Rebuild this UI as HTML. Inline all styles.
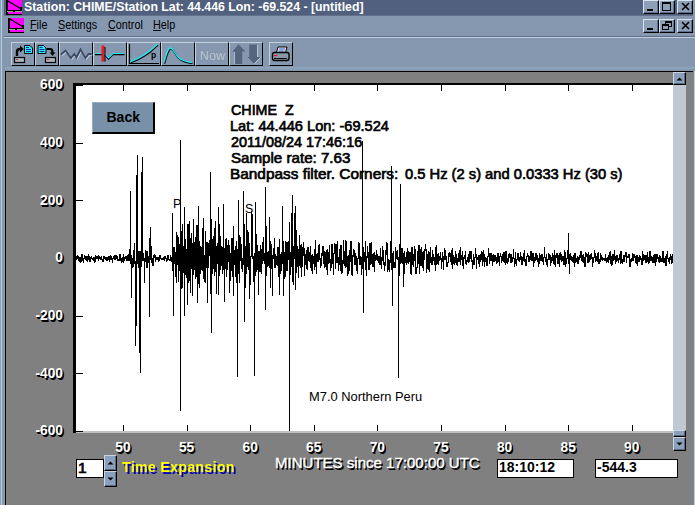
<!DOCTYPE html><html><head><meta charset="utf-8"><style>
html,body{margin:0;padding:0;}
body{width:695px;height:505px;position:relative;overflow:hidden;background:#8598b0;font-family:"Liberation Sans", sans-serif;}
div{font-family:"Liberation Sans", sans-serif;}
</style></head><body>
<div style="position:absolute;left:0px;top:0px;width:1px;height:505px;background:#8ca0b8"></div>
<div style="position:absolute;left:1px;top:0px;width:1px;height:505px;background:#b8cce0"></div>
<div style="position:absolute;left:2px;top:0px;width:2px;height:505px;background:#8498b0"></div>
<div style="position:absolute;left:693px;top:0px;width:2px;height:16px;background:#8a9cb4"></div>
<div style="position:absolute;left:4px;top:0px;width:689px;height:15px;background:#50607e"></div>
<div style="position:absolute;left:4px;top:15px;width:689px;height:1px;background:#62728c"></div>
<svg style="position:absolute;left:6px;top:0px" width="16" height="15" viewBox="0 0 16 15" shape-rendering="crispEdges"><rect x="0" y="0" width="16" height="15" fill="#ff00ff"/><rect x="0" y="0" width="1.5" height="15" fill="#000"/><rect x="0" y="14" width="16" height="1" fill="#000"/><rect x="0" y="10" width="16" height="1" fill="#000"/><rect x="1" y="11" width="15" height="1" fill="#98b088"/><rect x="7" y="11" width="2" height="1" fill="#000"/><rect x="14" y="7" width="2" height="3" fill="#000"/><path d="M1 0.5 L14.5 8.5" stroke="#000" stroke-width="1.3" shape-rendering="auto"/></svg>
<div style="position:absolute;left:24px;top:0.95px;font-size:12.3px;line-height:12.3px;color:#fff;font-weight:bold;white-space:pre;">Station: CHIME/Station Lat: 44.446 Lon: -69.524 - [untitled]</div>
<div style="position:absolute;left:643px;top:0px;width:16px;height:14px;box-sizing:border-box;background:#8ca0b8;border-top:1px solid #d8e4f0;border-left:1px solid #d8e4f0;border-right:1px solid #000;border-bottom:1px solid #000;box-shadow:inset -1px -1px 0 #607090;"><svg style="position:absolute;left:0;top:0" width="14" height="12" shape-rendering="crispEdges"><rect x="3" y="8" width="6" height="2" fill="#000"/></svg></div>
<div style="position:absolute;left:659px;top:0px;width:16px;height:14px;box-sizing:border-box;background:#8ca0b8;border-top:1px solid #d8e4f0;border-left:1px solid #d8e4f0;border-right:1px solid #000;border-bottom:1px solid #000;box-shadow:inset -1px -1px 0 #607090;"><svg style="position:absolute;left:0;top:0" width="14" height="12" shape-rendering="crispEdges"><rect x="2.5" y="1.5" width="8" height="8" fill="none" stroke="#000"/><rect x="3" y="2" width="7" height="1" fill="#000"/></svg></div>
<div style="position:absolute;left:677px;top:0px;width:16px;height:14px;box-sizing:border-box;background:#8ca0b8;border-top:1px solid #d8e4f0;border-left:1px solid #d8e4f0;border-right:1px solid #000;border-bottom:1px solid #000;box-shadow:inset -1px -1px 0 #607090;"><svg style="position:absolute;left:0;top:0" width="14" height="12" shape-rendering="crispEdges"><path d="M4 2 L11 9 M11 2 L4 9" stroke="#000" stroke-width="1.6" shape-rendering="auto"/></svg></div>
<svg style="position:absolute;left:8px;top:18px" width="16" height="15" viewBox="0 0 16 15" shape-rendering="crispEdges"><rect x="0" y="0" width="16" height="15" fill="#ff00ff"/><rect x="0" y="0" width="1.5" height="15" fill="#000"/><rect x="0" y="14" width="16" height="1" fill="#000"/><rect x="0" y="10" width="16" height="1" fill="#000"/><rect x="1" y="11" width="15" height="1" fill="#98b088"/><rect x="7" y="11" width="2" height="1" fill="#000"/><rect x="14" y="7" width="2" height="3" fill="#000"/><path d="M1 0.5 L14.5 8.5" stroke="#000" stroke-width="1.3" shape-rendering="auto"/></svg>
<div style="position:absolute;left:30px;top:19.39px;font-size:12px;line-height:12px;color:#000;font-weight:normal;white-space:pre;transform:scaleX(0.9);transform-origin:0 0;"><u>F</u>ile</div>
<div style="position:absolute;left:58px;top:19.39px;font-size:12px;line-height:12px;color:#000;font-weight:normal;white-space:pre;transform:scaleX(0.9);transform-origin:0 0;"><u>S</u>ettings</div>
<div style="position:absolute;left:108px;top:19.39px;font-size:12px;line-height:12px;color:#000;font-weight:normal;white-space:pre;transform:scaleX(0.9);transform-origin:0 0;"><u>C</u>ontrol</div>
<div style="position:absolute;left:153px;top:19.39px;font-size:12px;line-height:12px;color:#000;font-weight:normal;white-space:pre;transform:scaleX(0.9);transform-origin:0 0;"><u>H</u>elp</div>
<div style="position:absolute;left:643px;top:19px;width:16px;height:14px;box-sizing:border-box;background:#8ca0b8;border-top:1px solid #d8e4f0;border-left:1px solid #d8e4f0;border-right:1px solid #000;border-bottom:1px solid #000;box-shadow:inset -1px -1px 0 #607090;"><svg style="position:absolute;left:0;top:0" width="14" height="12" shape-rendering="crispEdges"><rect x="3" y="8" width="6" height="2" fill="#000"/></svg></div>
<div style="position:absolute;left:659px;top:19px;width:16px;height:14px;box-sizing:border-box;background:#8ca0b8;border-top:1px solid #d8e4f0;border-left:1px solid #d8e4f0;border-right:1px solid #000;border-bottom:1px solid #000;box-shadow:inset -1px -1px 0 #607090;"><svg style="position:absolute;left:0;top:0" width="14" height="12" shape-rendering="crispEdges"><rect x="5.5" y="1.5" width="6" height="5" fill="none" stroke="#000"/><rect x="6" y="2" width="5" height="1" fill="#000"/><rect x="2.5" y="4.5" width="6" height="5" fill="#8ca0b8" stroke="#000"/><rect x="3" y="5" width="5" height="1" fill="#000"/></svg></div>
<div style="position:absolute;left:677px;top:19px;width:16px;height:14px;box-sizing:border-box;background:#8ca0b8;border-top:1px solid #d8e4f0;border-left:1px solid #d8e4f0;border-right:1px solid #000;border-bottom:1px solid #000;box-shadow:inset -1px -1px 0 #607090;"><svg style="position:absolute;left:0;top:0" width="14" height="12" shape-rendering="crispEdges"><path d="M4 2 L11 9 M11 2 L4 9" stroke="#000" stroke-width="1.6" shape-rendering="auto"/></svg></div>
<div style="position:absolute;left:4px;top:36px;width:691px;height:1px;background:#607088"></div>
<div style="position:absolute;left:4px;top:37px;width:691px;height:1px;background:#c0d0e0"></div>
<div style="position:absolute;left:11px;top:42px;width:24px;height:24px;box-sizing:border-box;background:#8598b0;border-top:1px solid #c4d0dc;border-left:1px solid #c4d0dc;border-right:1px solid #000;border-bottom:1px solid #000;"></div>
<div style="position:absolute;left:35px;top:42px;width:24px;height:24px;box-sizing:border-box;background:#8598b0;border-top:1px solid #c4d0dc;border-left:1px solid #c4d0dc;border-right:1px solid #000;border-bottom:1px solid #000;"></div>
<div style="position:absolute;left:59px;top:42px;width:34px;height:24px;box-sizing:border-box;background:#8598b0;border-top:1px solid #c4d0dc;border-left:1px solid #c4d0dc;border-right:1px solid #000;border-bottom:1px solid #000;"></div>
<div style="position:absolute;left:93px;top:42px;width:34px;height:24px;box-sizing:border-box;background:#8598b0;border-top:1px solid #c4d0dc;border-left:1px solid #c4d0dc;border-right:1px solid #000;border-bottom:1px solid #000;"></div>
<div style="position:absolute;left:127px;top:42px;width:34px;height:24px;box-sizing:border-box;background:#8598b0;border-top:1px solid #c4d0dc;border-left:1px solid #c4d0dc;border-right:1px solid #000;border-bottom:1px solid #000;"></div>
<div style="position:absolute;left:161px;top:42px;width:34px;height:24px;box-sizing:border-box;background:#8598b0;border-top:1px solid #c4d0dc;border-left:1px solid #c4d0dc;border-right:1px solid #000;border-bottom:1px solid #000;"></div>
<div style="position:absolute;left:195px;top:42px;width:34px;height:24px;box-sizing:border-box;background:#8598b0;border-top:1px solid #c4d0dc;border-left:1px solid #c4d0dc;border-right:1px solid #000;border-bottom:1px solid #000;"></div>
<div style="position:absolute;left:229px;top:42px;width:34px;height:24px;box-sizing:border-box;background:#8598b0;border-top:1px solid #c4d0dc;border-left:1px solid #c4d0dc;border-right:1px solid #000;border-bottom:1px solid #000;"></div>
<div style="position:absolute;left:269px;top:42px;width:24px;height:24px;box-sizing:border-box;background:#8598b0;border-top:1px solid #c4d0dc;border-left:1px solid #c4d0dc;border-right:1px solid #000;border-bottom:1px solid #000;"></div>
<svg style="position:absolute;left:0;top:0" width="300" height="70"><path d="M17 56 V52 Q17 49 20 49 H21" fill="none" stroke="#000" stroke-width="2.4"/><path d="M20 45.5 L23.8 49 L20 52.5 Z" fill="#000"/><path d="M24.5 45.5 H30 L32.5 48 V53.5 H24.5 Z" fill="#30e8f8" stroke="#000" stroke-width="1"/><path d="M26 47.5 H29 M26 49.5 H31 M26 51.5 H31" stroke="#1030a0" stroke-width="1"/><rect x="14.5" y="57.5" width="10" height="5" fill="#a8b4c0" stroke="#000" stroke-width="1.2"/><path d="M16 59.5 H18" stroke="#e02030" stroke-width="1"/><path d="M38 45.5 H43.5 L46 48 V53.5 H38 Z" fill="#30e8f8" stroke="#000" stroke-width="1"/><path d="M39.5 47.5 H42.5 M39.5 49.5 H44.5 M39.5 51.5 H44.5" stroke="#1030a0" stroke-width="1"/><path d="M46.5 49 H50 Q52.5 49 52.5 52 V53" fill="none" stroke="#000" stroke-width="2.2"/><path d="M49.5 52.5 L52.5 56 L55.5 52.5 Z" fill="#000"/><rect x="45.5" y="57.5" width="10" height="5" fill="#a8b4c0" stroke="#000" stroke-width="1.2"/><path d="M47 59.5 H49" stroke="#e02030" stroke-width="1"/><path d="M61 54.5 L65.5 50.5 L71 58 L74.3 54 L76.5 57.5 L80.5 49.5 L85.5 58 L88.5 54 H91.5" transform="translate(1,1)" fill="none" stroke="#c8d4e0" stroke-width="1.2"/><path d="M61 54.5 L65.5 50.5 L71 58 L74.3 54 L76.5 57.5 L80.5 49.5 L85.5 58 L88.5 54 H91.5" fill="none" stroke="#3c4a62" stroke-width="1.8"/><path d="M95 54.5 H102 M104.5 54.5 L108.5 59 L113 54.5 H124.5" fill="none" stroke="#000" stroke-width="1.4"/><path d="M95 53.5 H102 M104.5 53.5 L108.5 58 L113 53.5 H124.5" fill="none" stroke="#20e8f0" stroke-width="1.2"/><rect x="101.5" y="45.5" width="3" height="16" fill="#e81828"/><path d="M105 47 V61.5" stroke="#000" stroke-width="1"/><path d="M129.5 44 V63.5 H159" fill="none" stroke="#000" stroke-width="1.2"/><path d="M131 62.5 Q145 58 158 45" fill="none" stroke="#000" stroke-width="1.6"/><path d="M130.5 61.5 Q144.5 57 157.5 44" fill="none" stroke="#20e8f0" stroke-width="1.4"/><text x="151" y="57.5" font-family="Liberation Sans" font-size="8.5" font-weight="bold" fill="#000">p</text><path d="M164.5 63.5 C167 55 168 49 171 49 C174 49 175 55 179 58.5 C183 62 188 63 192.5 63.5" fill="none" stroke="#000" stroke-width="1.6"/><path d="M164 62.5 C166.5 54 167.5 48 170.5 48 C173.5 48 174.5 54 178.5 57.5 C182.5 61 187.5 62 192 62.5" fill="none" stroke="#20e8f0" stroke-width="1.3"/><text x="199.8" y="59.6" font-family="Liberation Sans" font-size="12.6" fill="#b4c0cc" stroke="#66768e" stroke-width="0.7" paint-order="stroke">Now</text><text x="199.8" y="59.6" font-family="Liberation Sans" font-size="12.6" fill="#b4c0cc">Now</text><path d="M237.8 43.8 L245.5 51.5 H242.2 V64 H234.5 V51.5 H231 Z" fill="#56657e"/><path d="M231.5 51.5 L237.8 44.5 M234.5 52 V64" stroke="#a8b8c8" stroke-width="1"/><path d="M249.2 44.5 H257.6 V57 H260.8 L254.2 64 L247.6 57 H249.2 Z" fill="#56657e"/><path d="M257.6 45 V57 M260.5 57.5 L254.2 64" stroke="#c0ccd8" stroke-width="1"/><path d="M278 47 H287 L285.5 52.5 H276.5 Z" fill="#f0f4f8" stroke="#000" stroke-width="1"/><path d="M279 49 H285 M278.5 51 H284.5" stroke="#3050c0" stroke-width="1"/><rect x="272.5" y="52.5" width="16.5" height="8" rx="2" fill="#8898a8" stroke="#000" stroke-width="1.4"/><path d="M274 55.5 H277.5" stroke="#e02030" stroke-width="1.2"/><path d="M274 58.5 H287" stroke="#000" stroke-width="1"/></svg>
<div style="position:absolute;left:5px;top:67px;width:690px;height:2px;background:#8fa3bb"></div>
<div style="position:absolute;left:5px;top:71px;width:687px;height:434px;background:#808080"></div>
<div style="position:absolute;left:692px;top:71px;width:2px;height:434px;background:#788494"></div>
<div style="position:absolute;left:694px;top:71px;width:1px;height:434px;background:#c0ccd8"></div>
<div style="position:absolute;left:5px;top:71px;width:688px;height:1px;background:#000"></div>
<div style="position:absolute;left:5px;top:71px;width:1px;height:434px;background:#000"></div>
<div style="position:absolute;left:76px;top:85px;width:597px;height:346px;background:#fff"></div>
<div style="position:absolute;left:73px;top:83px;width:600px;height:2px;background:#000"></div>
<div style="position:absolute;left:73px;top:83px;width:3px;height:350px;background:#000"></div>
<div style="position:absolute;left:76px;top:431px;width:597px;height:2px;background:#c0c0c0"></div>
<svg style="position:absolute;left:0;top:0" width="695" height="505" shape-rendering="crispEdges">
<path d="M76 431.5H83M76 373.5H83M76 316.5H83M76 258.5H83M76 200.5H83M76 143.5H83M76 85.5H83M123.5 425V431M123.5 85V91M187.5 425V431M187.5 85V91M250.5 425V431M250.5 85V91M314.5 425V431M314.5 85V91M377.5 425V431M377.5 85V91M441.5 425V431M441.5 85V91M505.5 425V431M505.5 85V91M568.5 425V431M568.5 85V91M632.5 425V431M632.5 85V91" stroke="#000" stroke-width="1" fill="none"/>
<path d="M76.5 256V260M77.5 255V259M78.5 256V261M79.5 257V262M80.5 257V263M81.5 254V262M82.5 254V261M83.5 258V263M84.5 255V259M85.5 256V260M86.5 256V261M87.5 256V262M88.5 254V260M89.5 256V262M90.5 257V262M91.5 256V259M92.5 258V260M93.5 257V261M94.5 257V263M95.5 255V262M96.5 256V259M97.5 256V259M98.5 255V261M99.5 256V259M100.5 257V260M101.5 256V260M102.5 259V262M103.5 256V262M104.5 256V259M105.5 257V260M106.5 257V261M107.5 257V261M108.5 256V260M109.5 256V262M110.5 255V260M111.5 256V260M112.5 258V263M113.5 256V259M114.5 255V260M115.5 255V260M116.5 255V259M117.5 256V261M118.5 259V261M119.5 254V261M120.5 254V261M121.5 258V263M122.5 257V262M123.5 254V263M124.5 257V261M125.5 256V259M126.5 256V261M127.5 255V261M128.5 254V261M129.5 249V261M130.5 191V264M131.5 255V298M132.5 258V268M133.5 250V267M134.5 243V264M135.5 261V346M136.5 175V326M137.5 155V264M138.5 251V268M139.5 251V353M140.5 251V373M141.5 172V267M142.5 157V261M143.5 253V261M144.5 258V283M145.5 250V262M146.5 251V268M147.5 251V268M148.5 256V263M149.5 238V317M150.5 227V260M151.5 246V263M152.5 258V266M153.5 255V266M154.5 254V258M155.5 255V262M156.5 257V260M157.5 257V260M158.5 257V262M159.5 255V261M160.5 255V259M161.5 258V260M162.5 258V260M163.5 257V260M164.5 256V261M165.5 256V259M166.5 258V262M167.5 255V261M168.5 255V260M169.5 259V261M170.5 255V261M171.5 257V262M172.5 213V271M173.5 247V316M174.5 247V264M175.5 252V277M176.5 232V283M177.5 235V265M178.5 237V282M179.5 244V271M180.5 140V411M181.5 231V289M182.5 224V288M183.5 246V273M184.5 207V316M185.5 239V275M186.5 249V278M187.5 224V305M188.5 224V283M189.5 221V281M190.5 238V293M191.5 233V269M192.5 243V296M193.5 219V275M194.5 242V270M195.5 237V279M196.5 225V277M197.5 225V303M198.5 206V284M199.5 241V288M200.5 246V274M201.5 247V270M202.5 228V271M203.5 218V279M204.5 255V282M205.5 231V283M206.5 242V268M207.5 242V303M208.5 243V268M209.5 240V256M210.5 172V294M211.5 219V333M212.5 239V274M213.5 236V269M214.5 228V276M215.5 221V272M216.5 246V294M217.5 243V264M218.5 207V295M219.5 224V276M220.5 236V270M221.5 246V266M222.5 247V274M223.5 204V270M224.5 248V302M225.5 239V269M226.5 238V277M227.5 245V270M228.5 240V262M229.5 245V293M230.5 253V281M231.5 238V271M232.5 238V277M233.5 226V296M234.5 250V265M235.5 246V277M236.5 241V283M237.5 249V377M238.5 200V274M239.5 235V283M240.5 237V261M241.5 244V269M242.5 258V272M243.5 191V265M244.5 224V322M245.5 246V288M246.5 213V274M247.5 230V267M248.5 232V270M249.5 243V299M250.5 256V285M251.5 211V257M252.5 214V259M253.5 256V282M254.5 253V376M255.5 202V276M256.5 234V272M257.5 245V270M258.5 251V295M259.5 251V272M260.5 245V272M261.5 249V274M262.5 242V264M263.5 237V261M264.5 253V264M265.5 187V310M266.5 226V276M267.5 252V267M268.5 251V266M269.5 217V268M270.5 241V288M271.5 244V269M272.5 255V296M273.5 248V259M274.5 238V268M275.5 254V268M276.5 256V265M277.5 247V266M278.5 247V277M279.5 239V295M280.5 254V274M281.5 252V271M282.5 206V264M283.5 241V296M284.5 252V279M285.5 241V277M286.5 242V271M287.5 242V271M288.5 241V260M289.5 222V431M290.5 252V275M291.5 213V267M292.5 195V282M293.5 246V285M294.5 213V259M295.5 206V290M296.5 230V273M297.5 246V267M298.5 249V278M299.5 235V266M300.5 245V268M301.5 244V277M302.5 247V267M303.5 242V256M304.5 248V276M305.5 254V265M306.5 250V269M307.5 247V270M308.5 247V261M309.5 252V262M310.5 246V268M311.5 255V271M312.5 254V274M313.5 256V264M314.5 249V270M315.5 240V267M316.5 254V274M317.5 253V262M318.5 245V262M319.5 244V260M320.5 258V268M321.5 253V266M322.5 246V256M323.5 246V264M324.5 251V268M325.5 252V267M326.5 250V270M327.5 249V275M328.5 252V264M329.5 245V263M330.5 259V271M331.5 244V268M332.5 244V264M333.5 253V275M334.5 243V254M335.5 244V269M336.5 244V263M337.5 241V263M338.5 257V271M339.5 249V265M340.5 245V271M341.5 245V274M342.5 260V273M343.5 240V264M344.5 251V266M345.5 240V268M346.5 241V267M347.5 256V276M348.5 255V274M349.5 250V271M350.5 241V262M351.5 241V275M352.5 255V276M353.5 249V257M354.5 250V265M355.5 253V265M356.5 256V271M357.5 258V274M358.5 242V259M359.5 243V265M360.5 256V265M361.5 257V275M362.5 141V269M363.5 247V313M364.5 252V262M365.5 241V270M366.5 256V276M367.5 246V258M368.5 252V270M369.5 243V270M370.5 243V265M371.5 242V264M372.5 254V267M373.5 253V267M374.5 252V272M375.5 255V261M376.5 250V260M377.5 254V261M378.5 256V263M379.5 256V265M380.5 248V265M381.5 257V269M382.5 246V261M383.5 250V265M384.5 262V271M385.5 250V266M386.5 242V255M387.5 243V272M388.5 259V270M389.5 260V272M390.5 241V263M391.5 166V270M392.5 253V306M393.5 251V268M394.5 262V268M395.5 247V268M396.5 251V259M397.5 250V260M398.5 257V378M399.5 244V276M400.5 184V264M401.5 248V263M402.5 248V264M403.5 253V287M404.5 251V274M405.5 257V263M406.5 252V265M407.5 248V263M408.5 251V264M409.5 252V262M410.5 252V274M411.5 247V275M412.5 247V265M413.5 254V267M414.5 246V261M415.5 249V274M416.5 267V274M417.5 251V268M418.5 245V264M419.5 245V274M420.5 249V266M421.5 247V266M422.5 252V268M423.5 251V271M424.5 249V260M425.5 244V251M426.5 249V273M427.5 254V269M428.5 251V270M429.5 252V272M430.5 247V263M431.5 257V265M432.5 250V265M433.5 254V261M434.5 257V265M435.5 247V271M436.5 245V265M437.5 254V264M438.5 253V265M439.5 256V261M440.5 252V260M441.5 258V269M442.5 252V262M443.5 256V270M444.5 248V260M445.5 250V260M446.5 256V267M447.5 262V267M448.5 253V263M449.5 252V257M450.5 253V262M451.5 250V265M452.5 248V269M453.5 255V264M454.5 257V265M455.5 251V263M456.5 254V265M457.5 258V266M458.5 253V262M459.5 250V262M460.5 247V265M461.5 255V260M462.5 251V266M463.5 257V269M464.5 255V259M465.5 251V264M466.5 260V265M467.5 257V262M468.5 254V263M469.5 251V262M470.5 251V259M471.5 251V262M472.5 260V269M473.5 254V265M474.5 257V265M475.5 248V258M476.5 254V269M477.5 257V260M478.5 255V264M479.5 255V267M480.5 254V262M481.5 251V260M482.5 252V266M483.5 250V262M484.5 254V267M485.5 257V262M486.5 258V266M487.5 256V266M488.5 248V257M489.5 253V264M490.5 253V261M491.5 253V261M492.5 255V266M493.5 254V262M494.5 255V262M495.5 255V261M496.5 257V264M497.5 253V263M498.5 253V262M499.5 256V266M500.5 253V257M501.5 256V263M502.5 254V261M503.5 252V262M504.5 252V263M505.5 251V265M506.5 251V263M507.5 258V264M508.5 254V262M509.5 253V258M510.5 254V263M511.5 254V263M512.5 257V262M513.5 249V259M514.5 258V267M515.5 252V264M516.5 259V266M517.5 253V260M518.5 253V261M519.5 257V262M520.5 252V260M521.5 256V265M522.5 257V265M523.5 253V261M524.5 250V262M525.5 259V266M526.5 256V266M527.5 253V257M528.5 255V262M529.5 256V262M530.5 251V260M531.5 251V261M532.5 253V261M533.5 253V267M534.5 257V263M535.5 253V261M536.5 253V260M537.5 255V262M538.5 258V267M539.5 253V264M540.5 255V261M541.5 254V261M542.5 254V262M543.5 257V265M544.5 247V258M545.5 257V262M546.5 254V265M547.5 259V267M548.5 253V260M549.5 254V260M550.5 255V266M551.5 257V263M552.5 253V261M553.5 255V264M554.5 250V265M555.5 255V267M556.5 253V258M557.5 253V264M558.5 255V264M559.5 253V267M560.5 252V260M561.5 254V262M562.5 256V261M563.5 256V265M564.5 250V265M565.5 252V267M566.5 258V264M567.5 250V259M568.5 233V264M569.5 254V274M570.5 253V260M571.5 256V261M572.5 257V262M573.5 255V263M574.5 253V267M575.5 253V263M576.5 258V262M577.5 256V264M578.5 257V264M579.5 255V260M580.5 251V258M581.5 251V261M582.5 255V262M583.5 254V263M584.5 257V267M585.5 252V267M586.5 253V257M587.5 254V263M588.5 252V263M589.5 255V262M590.5 254V260M591.5 253V259M592.5 257V267M593.5 257V263M594.5 250V258M595.5 253V262M596.5 256V261M597.5 253V262M598.5 252V264M599.5 259V264M600.5 253V262M601.5 255V260M602.5 257V261M603.5 258V260M604.5 258V261M605.5 254V261M606.5 258V263M607.5 257V262M608.5 255V263M609.5 252V260M610.5 251V264M611.5 256V266M612.5 254V265M613.5 254V261M614.5 250V260M615.5 256V264M616.5 255V262M617.5 255V261M618.5 258V263M619.5 254V260M620.5 251V264M621.5 251V263M622.5 259V264M623.5 255V262M624.5 255V262M625.5 252V257M626.5 252V263M627.5 256V258M628.5 254V258M629.5 254V267M630.5 259V267M631.5 258V262M632.5 253V261M633.5 254V261M634.5 254V258M635.5 256V263M636.5 255V264M637.5 255V266M638.5 257V262M639.5 255V262M640.5 256V260M641.5 258V265M642.5 251V265M643.5 254V261M644.5 255V260M645.5 255V263M646.5 255V263M647.5 252V262M648.5 257V264M649.5 251V263M650.5 251V261M651.5 256V261M652.5 257V263M653.5 255V263M654.5 254V263M655.5 254V266M656.5 254V262M657.5 254V259M658.5 257V262M659.5 255V263M660.5 256V262M661.5 258V262M662.5 251V262M663.5 251V263M664.5 258V263M665.5 256V266M666.5 254V266M667.5 251V259M668.5 258V262M669.5 257V264M670.5 254V260M671.5 256V264M672.5 254V263" stroke="#000" stroke-width="1" fill="none"/>
</svg>
<div style="position:absolute;left:231px;top:103.48px;font-size:14.3px;line-height:14.3px;color:#000;font-weight:normal;white-space:pre;-webkit-text-stroke:0.65px #000;transform-origin:0 0;transform:scaleX(1.0);">CHIME  Z</div>
<div style="position:absolute;left:230px;top:119.48px;font-size:14.3px;line-height:14.3px;color:#000;font-weight:normal;white-space:pre;-webkit-text-stroke:0.65px #000;transform-origin:0 0;transform:scaleX(1.02);">Lat: 44.446 Lon: -69.524</div>
<div style="position:absolute;left:231px;top:135.48px;font-size:14.3px;line-height:14.3px;color:#000;font-weight:normal;white-space:pre;-webkit-text-stroke:0.65px #000;transform-origin:0 0;transform:scaleX(1.008);">2011/08/24 17:46:16</div>
<div style="position:absolute;left:231px;top:151.48px;font-size:14.3px;line-height:14.3px;color:#000;font-weight:normal;white-space:pre;-webkit-text-stroke:0.65px #000;transform-origin:0 0;transform:scaleX(1.058);">Sample rate: 7.63</div>
<div style="position:absolute;left:230px;top:167.48px;font-size:14.3px;line-height:14.3px;color:#000;font-weight:normal;white-space:pre;-webkit-text-stroke:0.65px #000;transform-origin:0 0;transform:scaleX(1.075);">Bandpass filter. Corners:</div>
<div style="position:absolute;left:404.8px;top:167.48px;font-size:14.3px;line-height:14.3px;color:#000;font-weight:normal;white-space:pre;-webkit-text-stroke:0.65px #000;transform-origin:0 0;transform:scaleX(1.029);">0.5 Hz (2 s) and 0.0333 Hz (30 s)</div>
<div style="position:absolute;left:173px;top:197.82px;font-size:12.5px;line-height:12.5px;color:#000;font-weight:normal;white-space:pre;">P</div>
<div style="position:absolute;left:245px;top:203.32px;font-size:12.5px;line-height:12.5px;color:#000;font-weight:normal;white-space:pre;">S</div>
<div style="position:absolute;left:309px;top:390.77px;font-size:12.9px;line-height:12.9px;color:#000;font-weight:normal;white-space:pre;">M7.0 Northern Peru</div>
<div style="position:absolute;left:92px;top:102px;width:63px;height:32px;box-sizing:border-box;background:#7890a8;border-top:1px solid #98acc4;border-left:1px solid #98acc4;border-right:2px solid #000;border-bottom:2px solid #000;"></div><div style="position:absolute;left:106.5px;top:110.42px;font-size:14px;line-height:14px;color:#000;font-weight:bold;white-space:pre;">Back</div>
<div style="position:absolute;right:632px;top:424.35px;font-size:13.8px;line-height:13.8px;color:#fff;font-weight:bold;white-space:pre;text-shadow:1px 1px 0 #000,1.5px 1.5px 0 #000;">-600</div>
<div style="position:absolute;right:632px;top:366.68px;font-size:13.8px;line-height:13.8px;color:#fff;font-weight:bold;white-space:pre;text-shadow:1px 1px 0 #000,1.5px 1.5px 0 #000;">-400</div>
<div style="position:absolute;right:632px;top:309.02px;font-size:13.8px;line-height:13.8px;color:#fff;font-weight:bold;white-space:pre;text-shadow:1px 1px 0 #000,1.5px 1.5px 0 #000;">-200</div>
<div style="position:absolute;right:632px;top:251.35px;font-size:13.8px;line-height:13.8px;color:#fff;font-weight:bold;white-space:pre;text-shadow:1px 1px 0 #000,1.5px 1.5px 0 #000;">0</div>
<div style="position:absolute;right:632px;top:193.68px;font-size:13.8px;line-height:13.8px;color:#fff;font-weight:bold;white-space:pre;text-shadow:1px 1px 0 #000,1.5px 1.5px 0 #000;">200</div>
<div style="position:absolute;right:632px;top:136.02px;font-size:13.8px;line-height:13.8px;color:#fff;font-weight:bold;white-space:pre;text-shadow:1px 1px 0 #000,1.5px 1.5px 0 #000;">400</div>
<div style="position:absolute;right:632px;top:78.35px;font-size:13.8px;line-height:13.8px;color:#fff;font-weight:bold;white-space:pre;text-shadow:1px 1px 0 #000,1.5px 1.5px 0 #000;">600</div>
<div style="position:absolute;left:23.0px;width:200px;text-align:center;top:441.15px;font-size:13.8px;line-height:13.8px;color:#fff;font-weight:bold;white-space:pre;text-shadow:1px 1px 0 #000,1.5px 1.5px 0 #000;">50</div>
<div style="position:absolute;left:86.595px;width:200px;text-align:center;top:441.15px;font-size:13.8px;line-height:13.8px;color:#fff;font-weight:bold;white-space:pre;text-shadow:1px 1px 0 #000,1.5px 1.5px 0 #000;">55</div>
<div style="position:absolute;left:150.19px;width:200px;text-align:center;top:441.15px;font-size:13.8px;line-height:13.8px;color:#fff;font-weight:bold;white-space:pre;text-shadow:1px 1px 0 #000,1.5px 1.5px 0 #000;">60</div>
<div style="position:absolute;left:213.78499999999997px;width:200px;text-align:center;top:441.15px;font-size:13.8px;line-height:13.8px;color:#fff;font-weight:bold;white-space:pre;text-shadow:1px 1px 0 #000,1.5px 1.5px 0 #000;">65</div>
<div style="position:absolute;left:277.38px;width:200px;text-align:center;top:441.15px;font-size:13.8px;line-height:13.8px;color:#fff;font-weight:bold;white-space:pre;text-shadow:1px 1px 0 #000,1.5px 1.5px 0 #000;">70</div>
<div style="position:absolute;left:340.97499999999997px;width:200px;text-align:center;top:441.15px;font-size:13.8px;line-height:13.8px;color:#fff;font-weight:bold;white-space:pre;text-shadow:1px 1px 0 #000,1.5px 1.5px 0 #000;">75</div>
<div style="position:absolute;left:404.57px;width:200px;text-align:center;top:441.15px;font-size:13.8px;line-height:13.8px;color:#fff;font-weight:bold;white-space:pre;text-shadow:1px 1px 0 #000,1.5px 1.5px 0 #000;">80</div>
<div style="position:absolute;left:468.16499999999996px;width:200px;text-align:center;top:441.15px;font-size:13.8px;line-height:13.8px;color:#fff;font-weight:bold;white-space:pre;text-shadow:1px 1px 0 #000,1.5px 1.5px 0 #000;">85</div>
<div style="position:absolute;left:531.76px;width:200px;text-align:center;top:441.15px;font-size:13.8px;line-height:13.8px;color:#fff;font-weight:bold;white-space:pre;text-shadow:1px 1px 0 #000,1.5px 1.5px 0 #000;">90</div>
<div style="position:absolute;left:673px;top:85px;width:13px;height:345px;background:#c0c8d4"></div>
<div style="position:absolute;left:673px;top:72px;width:13px;height:13px;box-sizing:border-box;background:#8aa0bc;border-top:1px solid #c8d4e0;border-left:1px solid #c8d4e0;border-right:1px solid #000;border-bottom:1px solid #000;box-shadow:inset -1px -1px 0 #5a6a80;"><svg width="11" height="11" style="position:absolute;left:0;top:0"><path d="M2.5 7.5 L5.5 4.5 L8.5 7.5 Z" fill="#000"/></svg></div>
<div style="position:absolute;left:673px;top:430px;width:13px;height:7px;box-sizing:border-box;background:#8aa0bc;border-top:1px solid #c8d4e0;border-left:1px solid #c8d4e0;border-right:1px solid #000;border-bottom:1px solid #000;box-shadow:inset -1px -1px 0 #5a6a80;"></div>
<div style="position:absolute;left:673px;top:437px;width:13px;height:14px;box-sizing:border-box;background:#8aa0bc;border-top:1px solid #c8d4e0;border-left:1px solid #c8d4e0;border-right:1px solid #000;border-bottom:1px solid #000;box-shadow:inset -1px -1px 0 #5a6a80;"><svg width="11" height="12" style="position:absolute;left:0;top:0"><path d="M2.5 4.5 L5.5 7.5 L8.5 4.5 Z" fill="#000"/></svg></div>
<div style="position:absolute;left:76px;top:459px;width:28px;height:19px;background:#fff;border:1px solid #000;box-sizing:border-box"></div>
<div style="position:absolute;left:78px;top:459.52px;font-size:15.5px;line-height:15.5px;color:#000;font-weight:normal;white-space:pre;-webkit-text-stroke:0.7px #000;">1</div>
<div style="position:absolute;left:104px;top:455px;width:13px;height:16px;box-sizing:border-box;background:#8aa0bc;border-top:1px solid #c8d4e0;border-left:1px solid #c8d4e0;border-right:1px solid #000;border-bottom:1px solid #000;box-shadow:inset -1px -1px 0 #5a6a80;"><svg width="11" height="14" style="position:absolute;left:0;top:0"><path d="M2.5 8.5 L5.5 5.5 L8.5 8.5 Z" fill="#000"/></svg></div>
<div style="position:absolute;left:104px;top:471px;width:13px;height:16px;box-sizing:border-box;background:#8aa0bc;border-top:1px solid #c8d4e0;border-left:1px solid #c8d4e0;border-right:1px solid #000;border-bottom:1px solid #000;box-shadow:inset -1px -1px 0 #5a6a80;"><svg width="11" height="14" style="position:absolute;left:0;top:0"><path d="M2.5 5.5 L5.5 8.5 L8.5 5.5 Z" fill="#000"/></svg></div>
<div style="position:absolute;left:122px;top:460.12px;font-size:14px;line-height:14px;color:#ffff00;font-weight:bold;white-space:pre;text-shadow:2px 2px 0 #0000b0;letter-spacing:0.4px;">Time Expansion</div>
<div style="position:absolute;left:275px;top:456.24px;font-size:14.6px;line-height:14.6px;color:#fff;font-weight:normal;white-space:pre;-webkit-text-stroke:0.4px #fff;text-shadow:1px 1px 0 #000,1.5px 1.5px 0 #000;transform:scaleX(1.03);transform-origin:0 0;">MINUTES since 17:00:00 UTC</div>
<div style="position:absolute;left:497px;top:459px;width:77px;height:19px;background:#fff;border:1px solid #000;box-sizing:border-box"></div>
<div style="position:absolute;left:499px;top:460.12px;font-size:14px;line-height:14px;color:#000;font-weight:bold;white-space:pre;">18:10:12</div>
<div style="position:absolute;left:595px;top:459px;width:83px;height:19px;background:#fff;border:1px solid #000;box-sizing:border-box"></div>
<div style="position:absolute;left:597px;top:460.12px;font-size:14px;line-height:14px;color:#000;font-weight:bold;white-space:pre;">-544.3</div>
</body></html>
